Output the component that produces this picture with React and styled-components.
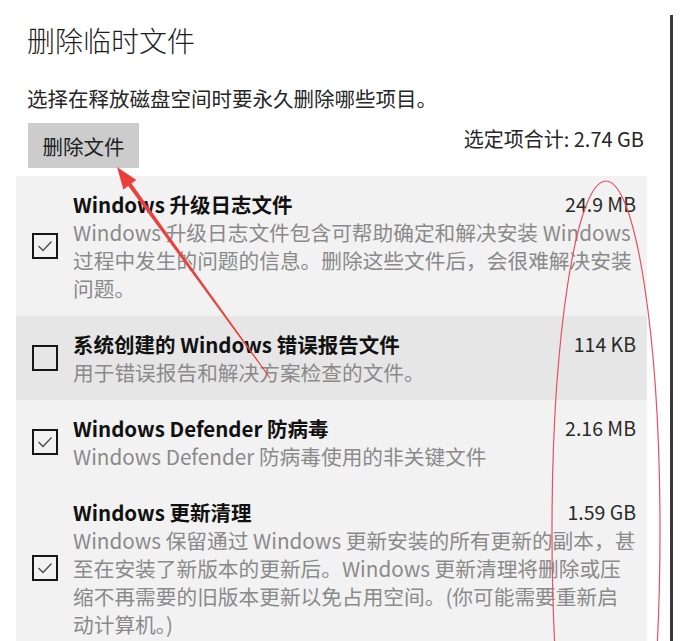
import React from 'react'
import styled, { createGlobalStyle } from 'styled-components'

const GlobalStyle = createGlobalStyle`
  html, body {
    margin: 0;
    padding: 0;
    background: #fff;
  }
  body {
    font-family: "Noto Sans CJK SC", "Noto Sans", sans-serif;
    color: #1f1f1f;
  }
`

const items = [
  {
    name: 'Windows 升级日志文件',
    size: '24.9 MB',
    checked: true,
    desc: [
      'Windows 升级日志文件包含可帮助确定和解决安装 Windows',
      '过程中发生的问题的信息。删除这些文件后，会很难解决安装',
      '问题。',
    ],
  },
  {
    name: '系统创建的 Windows 错误报告文件',
    size: '114 KB',
    checked: false,
    hover: true,
    desc: ['用于错误报告和解决方案检查的文件。'],
  },
  {
    name: 'Windows Defender 防病毒',
    size: '2.16 MB',
    checked: true,
    desc: ['Windows Defender 防病毒使用的非关键文件'],
  },
  {
    name: 'Windows 更新清理',
    size: '1.59 GB',
    checked: true,
    desc: [
      'Windows 保留通过 Windows 更新安装的所有更新的副本，甚',
      '至在安装了新版本的更新后。Windows 更新清理将删除或压',
      '缩不再需要的旧版本更新以免占用空间。(你可能需要重新启',
      '动计算机。)',
    ],
  },
]

const App = () => {
  return (
    <Page>
      <GlobalStyle />
      <Panel>
        <Title>删除临时文件</Title>
        <Subtitle>选择在释放磁盘空间时要永久删除哪些项目。</Subtitle>
        <ActionBar>
          <DeleteButton>删除文件</DeleteButton>
          <Total>选定项合计: 2.74 GB</Total>
        </ActionBar>
        <List>
          {items.map((item) => (
            <Row key={item.name} $hover={item.hover}>
              <Check>
                {item.checked && (
                  <svg width="22" height="22" viewBox="0 0 22 22">
                    <polyline points="4.5,11 9,15.5 17.5,6.5" fill="none" stroke="#4a4a4a" strokeWidth="1.3" />
                  </svg>
                )}
              </Check>
              <Body>
                <Head>
                  <Name>{item.name}</Name>
                  <Size>{item.size}</Size>
                </Head>
                {item.desc.map((line) => (
                  <Desc key={line}>{line}</Desc>
                ))}
              </Body>
            </Row>
          ))}
        </List>
      </Panel>
      <Rail />
      <Marks width="688" height="641" viewBox="0 0 688 641">
        <ellipse cx="606" cy="531" rx="54" ry="350" fill="none" stroke="#e8505e" strokeWidth="1.2" />
        <polygon
          points="117,167 136.4,180.1 131.5,183.6 270.4,377.7 269.6,378.3 128.3,186 123.4,189.5"
          fill="#ea3f3a"
        />
      </Marks>
    </Page>
  )
}

const Page = styled.div`
  position: relative;
  display: flex;
  align-items: flex-start;
  height: 641px;
  overflow: hidden;
  background: #fff;
`

const Panel = styled.div`
  display: flex;
  flex-direction: column;
  width: 631px;
  margin-left: 16px;
  padding-top: 22px;
`

const Title = styled.h1`
  margin: 0;
  padding-left: 11px;
  font-size: 28px;
  line-height: 36px;
  font-weight: 300;
  color: #1c1c1c;
`

const Subtitle = styled.p`
  margin: 26px 0 0;
  padding-left: 11px;
  font-size: 20.5px;
  line-height: 28px;
  color: #262626;
`

const ActionBar = styled.div`
  display: flex;
  justify-content: space-between;
  align-items: flex-start;
  margin-top: 11px;
  padding: 0 3px 0 12px;
`

const DeleteButton = styled.button`
  width: 111px;
  height: 45px;
  border: none;
  background: #cccccc;
  font-family: inherit;
  font-size: 20.5px;
  color: #222;
  padding: 0;
`

const Total = styled.div`
  margin-top: 2px;
  font-size: 20px;
  line-height: 28px;
  color: #262626;
`

const List = styled.div`
  margin-top: 8px;
  background: #f2f2f2;
`

const Row = styled.div`
  display: flex;
  align-items: center;
  gap: 15px;
  padding: 14px 11px 14px 16px;
  background: ${(p) => (p.$hover ? '#e6e6e6' : '#f2f2f2')};
`

const Check = styled.div`
  flex: none;
  display: flex;
  align-items: center;
  justify-content: center;
  width: 22px;
  height: 22px;
  border: 2.5px solid #161616;
`

const Body = styled.div`
  flex: 1;
  min-width: 0;
`

const Head = styled.div`
  display: flex;
  justify-content: space-between;
  align-items: center;
`

const Name = styled.div`
  font-size: 20.5px;
  line-height: 28px;
  font-weight: 700;
  color: #111;
  white-space: nowrap;
`

const Size = styled.div`
  font-size: 19.5px;
  line-height: 28px;
  color: #2a2a2a;
  white-space: nowrap;
`

const Desc = styled.div`
  font-size: 20.7px;
  line-height: 28px;
  color: #8a8a8a;
  white-space: nowrap;
`

const Rail = styled.div`
  flex: none;
  width: 3px;
  height: 626px;
  margin: 15px 0 0 23px;
  background: #3a3a3a;
`

const Marks = styled.svg`
  position: absolute;
  left: 0;
  top: 0;
  pointer-events: none;
`

export default App
